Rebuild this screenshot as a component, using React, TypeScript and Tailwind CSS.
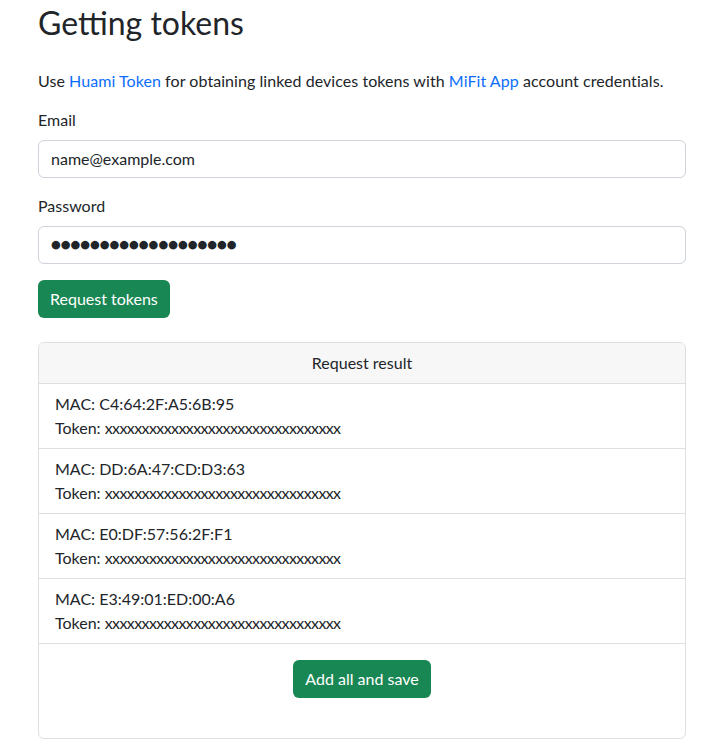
import React from "react";

const macs = ["C4:64:2F:A5:6B:95", "DD:6A:47:CD:D3:63", "E0:DF:57:56:2F:F1", "E3:49:01:ED:00:A6"];
const token = "xxxxxxxxxxxxxxxxxxxxxxxxxxxxxxxx";

export default function App() {
  return (
    <div
      className="min-h-[741px] bg-white text-[#212529] text-[16px] leading-6"
      style={{ fontFamily: 'Lato, "Noto Sans", sans-serif' }}
    >
      <div className="w-[648px] ml-[38px] pt-[5px]">
        <h1 className="text-[32px] leading-[36px] font-normal mb-[28px]">Getting tokens</h1>
        <p className="mb-[15px] tracking-[0.06px]">
          Use <a className="text-[#0d6efd]">Huami Token</a> for obtaining linked devices tokens with{" "}
          <a className="text-[#0d6efd]">MiFit App</a> account credentials.
        </p>
        <div className="mb-2">Email</div>
        <div className="h-[38px] border border-[#ced4da] rounded-[6px] px-3 flex items-center mb-4">
          name@example.com
        </div>
        <div className="mb-2">Password</div>
        <div
          className="h-[38px] border border-[#ced4da] rounded-[6px] px-3 flex items-center mb-4 text-[11.2px]"
          style={{ fontFamily: '"DejaVu Sans", sans-serif' }}
        >
          {"●".repeat(19)}
        </div>
        <button className="h-[38px] px-3 rounded-[6px] bg-[#198754] text-white">Request tokens</button>

        <div className="mt-6 border border-[#dfdfdf] rounded-[6px] overflow-hidden">
          <div className="bg-[#f7f7f7] border-b border-[#dfdfdf] py-2 px-4 text-center">Request result</div>
          {macs.map((m) => (
            <div key={m} className="border-b border-[#dfdfdf] py-2 px-4">
              <div>MAC: {m}</div>
              <div>
                Token: <span className="tracking-[-0.6px]">{token}</span>
              </div>
            </div>
          ))}
          <div className="flex justify-center pt-4 pb-[40px]">
            <button className="h-[38px] px-3 rounded-[6px] bg-[#198754] text-white">Add all and save</button>
          </div>
        </div>
      </div>
    </div>
  );
}
